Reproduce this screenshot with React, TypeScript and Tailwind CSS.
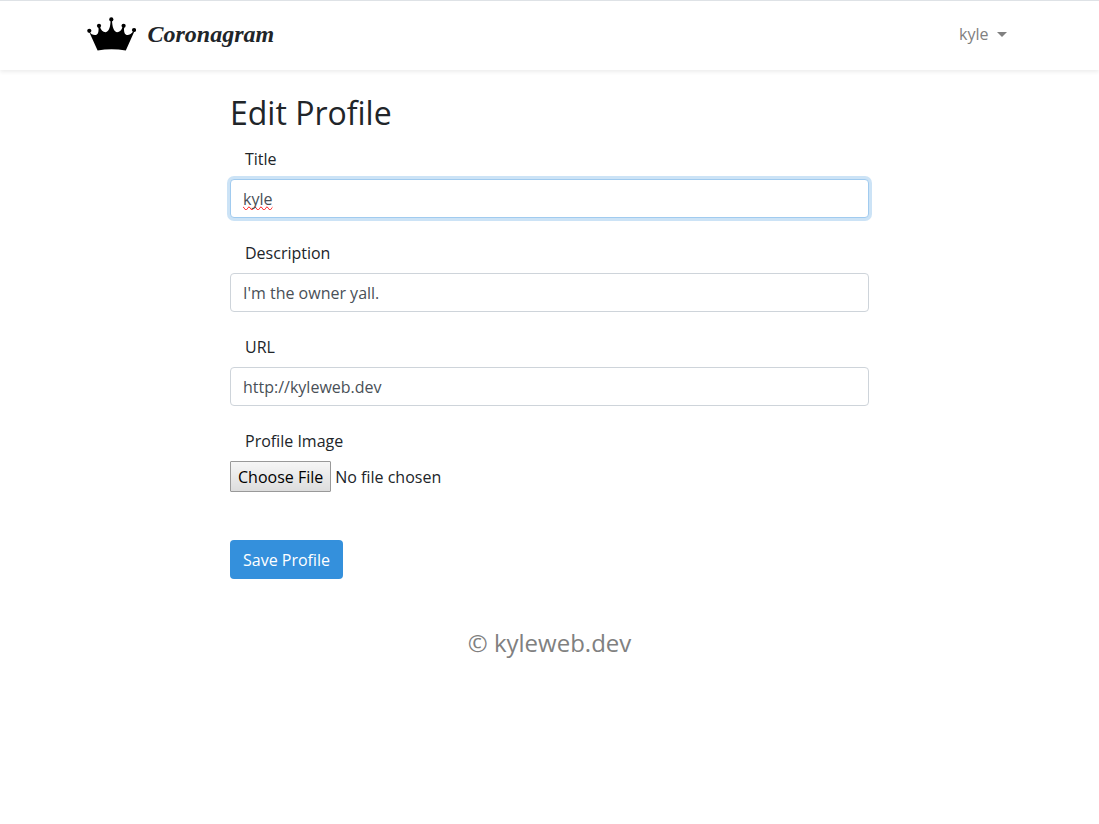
import { useState } from "react";

const labelClass = "mb-2 block px-[15px] leading-6";
const inputClass =
  "block h-[39px] w-full rounded border border-[#ced4da] bg-white px-3 text-[#495057] outline-none focus:border-[#a1cbef] focus:ring-3 focus:ring-[#3490dc]/25";

function Crown() {
  return (
    <svg viewBox="0 0 50 34" className="h-[34px] w-[50px]" fill="#000" aria-hidden="true">
      <circle cx="3.3" cy="13.8" r="2.1" />
      <circle cx="13" cy="8.8" r="2.1" />
      <circle cx="25.3" cy="2.4" r="2.1" />
      <circle cx="37.6" cy="8.8" r="2.1" />
      <circle cx="48" cy="13" r="2.1" />
      <path d="M3 14.5C5 17.5 8 18.5 10.5 17.8C12.4 16.9 12.9 14 12.4 10L13.9 9.8C15 13 17 15.3 19.6 15.2C23 14.6 24.4 10 24.6 3.5L26 3.5C26.3 10 27.8 14.6 31 15.2C33.6 15.3 35.6 13 36.7 9.8L38.2 10C37.7 14 38.2 16.9 40.1 17.8C42.6 18.5 45.4 17.2 47.4 14L48.3 14.4L39.8 33.4C30 31.8 21 31.8 11.6 33.4Z" />
    </svg>
  );
}

export default function App() {
  const [title, setTitle] = useState("kyle");
  const [description, setDescription] = useState("I'm the owner yall.");
  const [url, setUrl] = useState("http://kyleweb.dev");

  return (
    <div className="bg-white font-['Open_Sans',sans-serif] text-base text-[#212529]">
      <header className="border-t border-[#dee2e6] shadow-[0_2px_4px_rgba(0,0,0,0.075)]">
        <nav className="mx-auto flex h-[69px] max-w-[960px] items-center justify-between pr-[23px] pb-[3px] pl-4">
          <a href="#" className="flex items-center gap-3">
            <Crown />
            <span className="font-['Liberation_Serif',serif] text-2xl font-bold italic">Coronagram</span>
          </a>
          <button type="button" className="flex items-center gap-2 text-[#808080]">
            kyle
            <svg viewBox="0 0 10 5" className="h-[5px] w-[10px]" fill="currentColor" aria-hidden="true">
              <path d="M0 0H10L5 5Z" />
            </svg>
          </button>
        </nav>
      </header>

      <main className="mx-auto max-w-[639px] pt-[23px]">
        <form onSubmit={(event) => event.preventDefault()}>
          <h1 className="mb-[14px] text-[32px] leading-10">Edit Profile</h1>

          <div className="mb-[23px]">
            <label htmlFor="title" className={labelClass}>Title</label>
            <input
              id="title"
              type="text"
              autoFocus
              spellCheck={false}
              value={title}
              onChange={(event) => setTitle(event.target.value)}
              className={`${inputClass} [text-decoration-line:spelling-error] caret-transparent`}
            />
          </div>

          <div className="mb-[23px]">
            <label htmlFor="description" className={labelClass}>Description</label>
            <input
              id="description"
              type="text"
              value={description}
              onChange={(event) => setDescription(event.target.value)}
              className={inputClass}
            />
          </div>

          <div className="mb-[23px]">
            <label htmlFor="url" className={labelClass}>URL</label>
            <input
              id="url"
              type="text"
              value={url}
              onChange={(event) => setUrl(event.target.value)}
              className={inputClass}
            />
          </div>

          <div className="mb-12">
            <label htmlFor="image" className={labelClass}>Profile Image</label>
            <input
              id="image"
              type="file"
              className="block w-full file:mr-1 file:h-[31px] file:rounded-[1px] file:border file:border-solid file:border-[#999999] file:bg-linear-to-b file:from-[#f6f6f6] file:to-[#dddddd] file:px-[7px] file:text-black"
            />
          </div>

          <button type="submit" className="block h-[39px] rounded bg-[#3490dc] px-[13px] text-white">
            Save Profile
          </button>
        </form>
      </main>

      <footer className="pt-11 text-center text-2xl leading-10 text-[#808080]">© kyleweb.dev</footer>
    </div>
  );
}
